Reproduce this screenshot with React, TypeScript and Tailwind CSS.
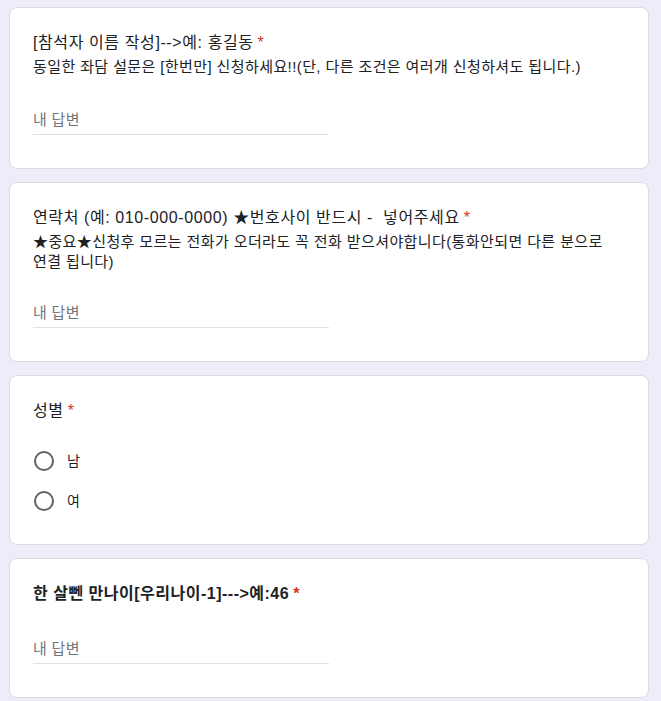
import React from "react";

const FONT = { fontFamily: '"Liberation Sans", Arial, "Noto Sans CJK KR", sans-serif' };

function Req() {
  return <span className="text-[#d93025] ml-[4px]">*</span>;
}

function Card({ children }: { children: React.ReactNode }) {
  return (
    <div className="bg-white border border-[#dadce0] rounded-[8px] px-[23px] pt-[23px] pb-[23px]">
      {children}
    </div>
  );
}

function Answer({ tight }: { tight?: boolean }) {
  return (
    <div
      className={
        (tight ? "mt-[29px] " : "mt-[31px] ") +
        "mb-[10px] w-[296px] border-b border-[#e0e0e0] pb-[2px]"
      }
    >
      <div className="text-[15px] leading-[24px] text-[#70757a] tracking-[0.3px]">내 답변</div>
    </div>
  );
}

function Radio({ label }: { label: string }) {
  return (
    <div className="flex items-center h-[40px]">
      <div className="w-[20px] h-[20px] rounded-full border-2 border-[#5f6368] ml-px" />
      <span className="ml-[13px] text-[14px] text-[#202124]">{label}</span>
    </div>
  );
}

export default function App() {
  return (
    <div className="min-h-[701px] bg-[#f0ebf8] pt-[7px] pl-[9px]" style={FONT}>
      <div className="w-[640px] flex flex-col gap-[13px]">
        <Card>
          <div className="text-[16px] leading-[24px] text-[#202124] tracking-[0.6px] break-keep">
            [참석자 이름 작성]--&gt;예: 홍길동
            <Req />
          </div>
          <div className="mt-[2px] text-[15px] leading-[20px] text-[#202124] tracking-[0.4px] break-keep">
            동일한 좌담 설문은 [한번만] 신청하세요!!(단, 다른 조건은 여러개 신청하셔도 됩니다.)
          </div>
          <Answer />
        </Card>
        <Card>
          <div className="text-[16px] leading-[24px] text-[#202124] tracking-[0.6px] break-keep">
            연락처 (예: 010-000-0000) ★번호사이 반드시 -&nbsp; 넣어주세요
            <Req />
          </div>
          <div className="mt-[2px] text-[15px] leading-[20px] text-[#202124] tracking-[0.4px] break-keep">
            ★중요★신청후 모르는 전화가 오더라도 꼭 전화 받으셔야합니다(통화안되면 다른 분으로 연결 됩니다)
          </div>
          <Answer tight />
        </Card>
        <Card>
          <div className="text-[16px] leading-[24px] text-[#202124] tracking-[0.6px]">
            성별
            <Req />
          </div>
          <div className="mt-[18px] flex flex-col">
            <Radio label="남" />
            <Radio label="여" />
          </div>
        </Card>
        <Card>
          <div className="text-[16px] leading-[24px] text-[#202124] font-bold tracking-[0.5px] break-keep">
            한 살뻰 만나이[우리나이-1]---&gt;예:46
            <Req />
          </div>
          <Answer />
        </Card>
      </div>
    </div>
  );
}
